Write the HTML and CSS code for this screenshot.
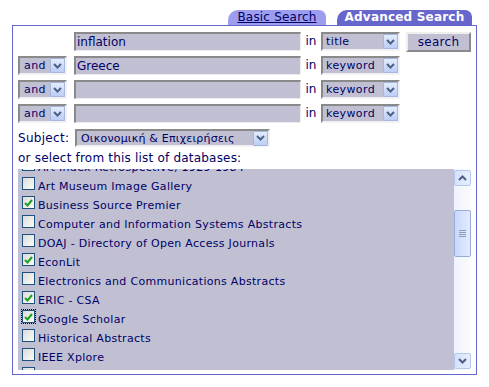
FILE: index.html
```html
<!DOCTYPE html>
<html>
<head>
<meta charset="utf-8">
<link rel="stylesheet" href="styles.css">
</head>
<body>
<div class="page">
  <div class="tabs">
    <a class="tab basic" href="#">Basic Search</a>
    <span class="tab adv">Advanced Search</span>
  </div>
  <div class="box">
    <div class="rows">
      <div class="row">
        <span class="bool"></span>
        <div class="field">inflation</div>
        <span class="in">in</span>
        <div class="sel where"><span class="val">title</span><span class="dd"><svg width="9" height="6" viewBox="0 0 9 6"><path d="M1 1 L4.5 4.5 L8 1" fill="none" stroke="#4d6185" stroke-width="2"/></svg></span></div>
        <button class="go">search</button>
      </div>
      <div class="row">
        <div class="sel bool"><span class="val">and</span><span class="dd"><svg width="9" height="6" viewBox="0 0 9 6"><path d="M1 1 L4.5 4.5 L8 1" fill="none" stroke="#4d6185" stroke-width="2"/></svg></span></div>
        <div class="field">Greece</div>
        <span class="in">in</span>
        <div class="sel where"><span class="val">keyword</span><span class="dd"><svg width="9" height="6" viewBox="0 0 9 6"><path d="M1 1 L4.5 4.5 L8 1" fill="none" stroke="#4d6185" stroke-width="2"/></svg></span></div>
      </div>
      <div class="row">
        <div class="sel bool"><span class="val">and</span><span class="dd"><svg width="9" height="6" viewBox="0 0 9 6"><path d="M1 1 L4.5 4.5 L8 1" fill="none" stroke="#4d6185" stroke-width="2"/></svg></span></div>
        <div class="field"></div>
        <span class="in">in</span>
        <div class="sel where"><span class="val">keyword</span><span class="dd"><svg width="9" height="6" viewBox="0 0 9 6"><path d="M1 1 L4.5 4.5 L8 1" fill="none" stroke="#4d6185" stroke-width="2"/></svg></span></div>
      </div>
      <div class="row">
        <div class="sel bool"><span class="val">and</span><span class="dd"><svg width="9" height="6" viewBox="0 0 9 6"><path d="M1 1 L4.5 4.5 L8 1" fill="none" stroke="#4d6185" stroke-width="2"/></svg></span></div>
        <div class="field"></div>
        <span class="in">in</span>
        <div class="sel where"><span class="val">keyword</span><span class="dd"><svg width="9" height="6" viewBox="0 0 9 6"><path d="M1 1 L4.5 4.5 L8 1" fill="none" stroke="#4d6185" stroke-width="2"/></svg></span></div>
      </div>
    </div>
    <div class="subject">
      <span class="label">Subject:</span>
      <div class="sel subj"><span class="val">Οικονομική &amp; Επιχειρήσεις</span><span class="dd"><svg width="9" height="6" viewBox="0 0 9 6"><path d="M1 1 L4.5 4.5 L8 1" fill="none" stroke="#4d6185" stroke-width="2"/></svg></span></div>
    </div>
    <div class="hint">or select from this list of databases:</div>
    <div class="listbox">
      <div class="viewport">
        <ul class="dbs">
          <li><span class="cb"></span>Art Index Retrospective, 1929-1984</li>
          <li><span class="cb"></span>Art Museum Image Gallery</li>
          <li><span class="cb on"><svg width="9" height="8" viewBox="0 0 9 8"><path d="M1 4 L3.5 6.5 L8 1" fill="none" stroke="#21a121" stroke-width="2"/></svg></span>Business Source Premier</li>
          <li><span class="cb"></span>Computer and Information Systems Abstracts</li>
          <li><span class="cb"></span>DOAJ - Directory of Open Access Journals</li>
          <li><span class="cb on"><svg width="9" height="8" viewBox="0 0 9 8"><path d="M1 4 L3.5 6.5 L8 1" fill="none" stroke="#21a121" stroke-width="2"/></svg></span>EconLit</li>
          <li><span class="cb"></span>Electronics and Communications Abstracts</li>
          <li><span class="cb on"><svg width="9" height="8" viewBox="0 0 9 8"><path d="M1 4 L3.5 6.5 L8 1" fill="none" stroke="#21a121" stroke-width="2"/></svg></span>ERIC - CSA</li>
          <li><span class="cb on focus"><svg width="9" height="8" viewBox="0 0 9 8"><path d="M1 4 L3.5 6.5 L8 1" fill="none" stroke="#21a121" stroke-width="2"/></svg></span>Google Scholar</li>
          <li><span class="cb"></span>Historical Abstracts</li>
          <li><span class="cb"></span>IEEE Xplore</li>
          <li><span class="cb"></span>INSPEC</li>
        </ul>
      </div>
      <div class="sbar">
        <span class="sbtn"><svg width="9" height="6" viewBox="0 0 9 6"><path d="M1 5 L4.5 1.5 L8 5" fill="none" stroke="#4d6185" stroke-width="2"/></svg></span>
        <div class="track">
          <span class="thumb"><svg width="7" height="7" viewBox="0 0 7 7"><path d="M0 .5H7M0 2.5H7M0 4.5H7M0 6.5H7" stroke="#8c9cbc" stroke-width="1"/></svg></span>
        </div>
        <span class="sbtn"><svg width="9" height="6" viewBox="0 0 9 6"><path d="M1 1 L4.5 4.5 L8 1" fill="none" stroke="#4d6185" stroke-width="2"/></svg></span>
      </div>
    </div>
  </div>
</div>
</body>
</html>
```
FILE: styles.css
```css
* { box-sizing: border-box; }
html, body { margin: 0; background: #fff; }
body {
  font-family: "DejaVu Sans", Verdana, sans-serif;
  color: #000066;
  font-size: 12px;
}
.page {
  width: 477px;
  padding: 10px 0 0 12px;
}
.tabs {
  display: flex;
  justify-content: flex-end;
  gap: 11px;
  padding-right: 5px;
  height: 15px;
}
.tab {
  height: 15px;
  line-height: 15px;
  font-size: 12px;
  border-radius: 10px 7px 0 0;
  text-align: center;
  letter-spacing: 0.2px;
}
.tab.basic {
  width: 98px;
  background: #9d9df0;
  color: #000066;
  text-decoration: underline;
}
.tab.adv {
  width: 135px;
  background: #6666cc;
  color: #fff;
  font-weight: bold;
}
.box {
  width: 465px;
  height: 350px;
  border: 1px solid #6666cc;
  padding: 6px 5px 4px 5px;
}
.rows {
  display: flex;
  flex-direction: column;
  gap: 5px;
}
.row {
  display: flex;
  align-items: flex-start;
  height: 19px;
}
.bool { width: 49px; margin-right: 7px; flex: none; }
.field {
  width: 227px;
  height: 19px;
  flex: none;
  background: #c0c0d2;
  border-top: 2px solid #8a8a8a;
  border-left: 2px solid #8a8a8a;
  border-right: 1px solid #eeeeee;
  border-bottom: 1px solid #eeeeee;
  padding-left: 1px;
  font-size: 12px;
  line-height: 16px;
}
.in {
  width: 20px;
  flex: none;
  text-align: center;
  font-size: 12px;
  line-height: 19px;
}
.sel {
  display: flex;
  align-items: center;
  justify-content: space-between;
  flex: none;
  height: 19px;
  background: #c0c0d2;
  border-top: 2px solid #8a8a8a;
  border-left: 2px solid #8a8a8a;
  border-right: 2px solid #f2f2f4;
  border-bottom: 2px solid #f2f2f4;
  font-size: 11px;
  letter-spacing: 0.4px;
}
.sel .val { padding-left: 4px; white-space: nowrap; }
.where { width: 79px; }
.where .val { padding-left: 3px; }
.dd {
  width: 15px;
  height: 15px;
  flex: none;
  display: flex;
  align-items: center;
  justify-content: center;
  background: linear-gradient(#e4ecfd, #bccef6);
  border: 1px solid #a4b8df;
  border-radius: 1px;
}
.go {
  margin-left: 6px;
  width: 65px;
  height: 20px;
  background: #c0c0d2;
  border-top: 2px solid #efefef;
  border-left: 2px solid #efefef;
  border-right: 2px solid #8a8a8a;
  border-bottom: 2px solid #8a8a8a;
  font-family: "DejaVu Sans", Verdana, sans-serif;
  font-size: 12px;
  color: #000066;
  padding: 0;
  letter-spacing: 0.3px;
}
.subject {
  display: flex;
  align-items: center;
  margin-top: 6px;
  height: 18px;
}
.label { width: 57px; letter-spacing: 0.3px; }
.subj { width: 195px; height: 18px; }
.subj .val { letter-spacing: 0.2px; padding-left: 4px; }
.hint {
  margin-top: 3px;
  height: 17px;
  line-height: 17px;
  letter-spacing: 0.2px;
}
.listbox {
  display: flex;
  width: 453px;
  height: 201px;
  margin-top: 2px;
  background: #c0c0d2;
}
.viewport {
  flex: 1;
  overflow: hidden;
}
.dbs {
  list-style: none;
  margin: -11px 0 0 0;
  padding: 0 0 0 4px;
}
.dbs li {
  display: flex;
  align-items: center;
  height: 19px;
  font-size: 11px;
  letter-spacing: 0.3px;
  white-space: nowrap;
}
.cb {
  width: 13px;
  height: 13px;
  flex: none;
  align-self: flex-start;
  margin-right: 3px;
  border: 1px solid #1c5180;
  background: linear-gradient(135deg, #dcdcd7, #fbfbf9);
  display: flex;
  align-items: center;
  justify-content: center;
}
.cb.focus { outline: 1px dotted #000; outline-offset: 0; }
.sbar {
  width: 17px;
  flex: none;
  display: flex;
  flex-direction: column;
  background: linear-gradient(90deg, #eef2fc, #fbfcfe);
  padding: 1px 0;
}
.sbtn {
  height: 16px;
  flex: none;
  display: flex;
  align-items: center;
  justify-content: center;
  background: linear-gradient(90deg, #d6e2fc, #e6eefd);
  border: 1px solid #b6c7ec;
  border-radius: 2px;
}
.track {
  flex: 1;
  padding-top: 24px;
}
.thumb {
  display: flex;
  align-items: center;
  justify-content: center;
  height: 47px;
  background: linear-gradient(90deg, #c9d7fb, #e4ebfd);
  border: 1px solid #98acdc;
  border-radius: 2px;
}
```
